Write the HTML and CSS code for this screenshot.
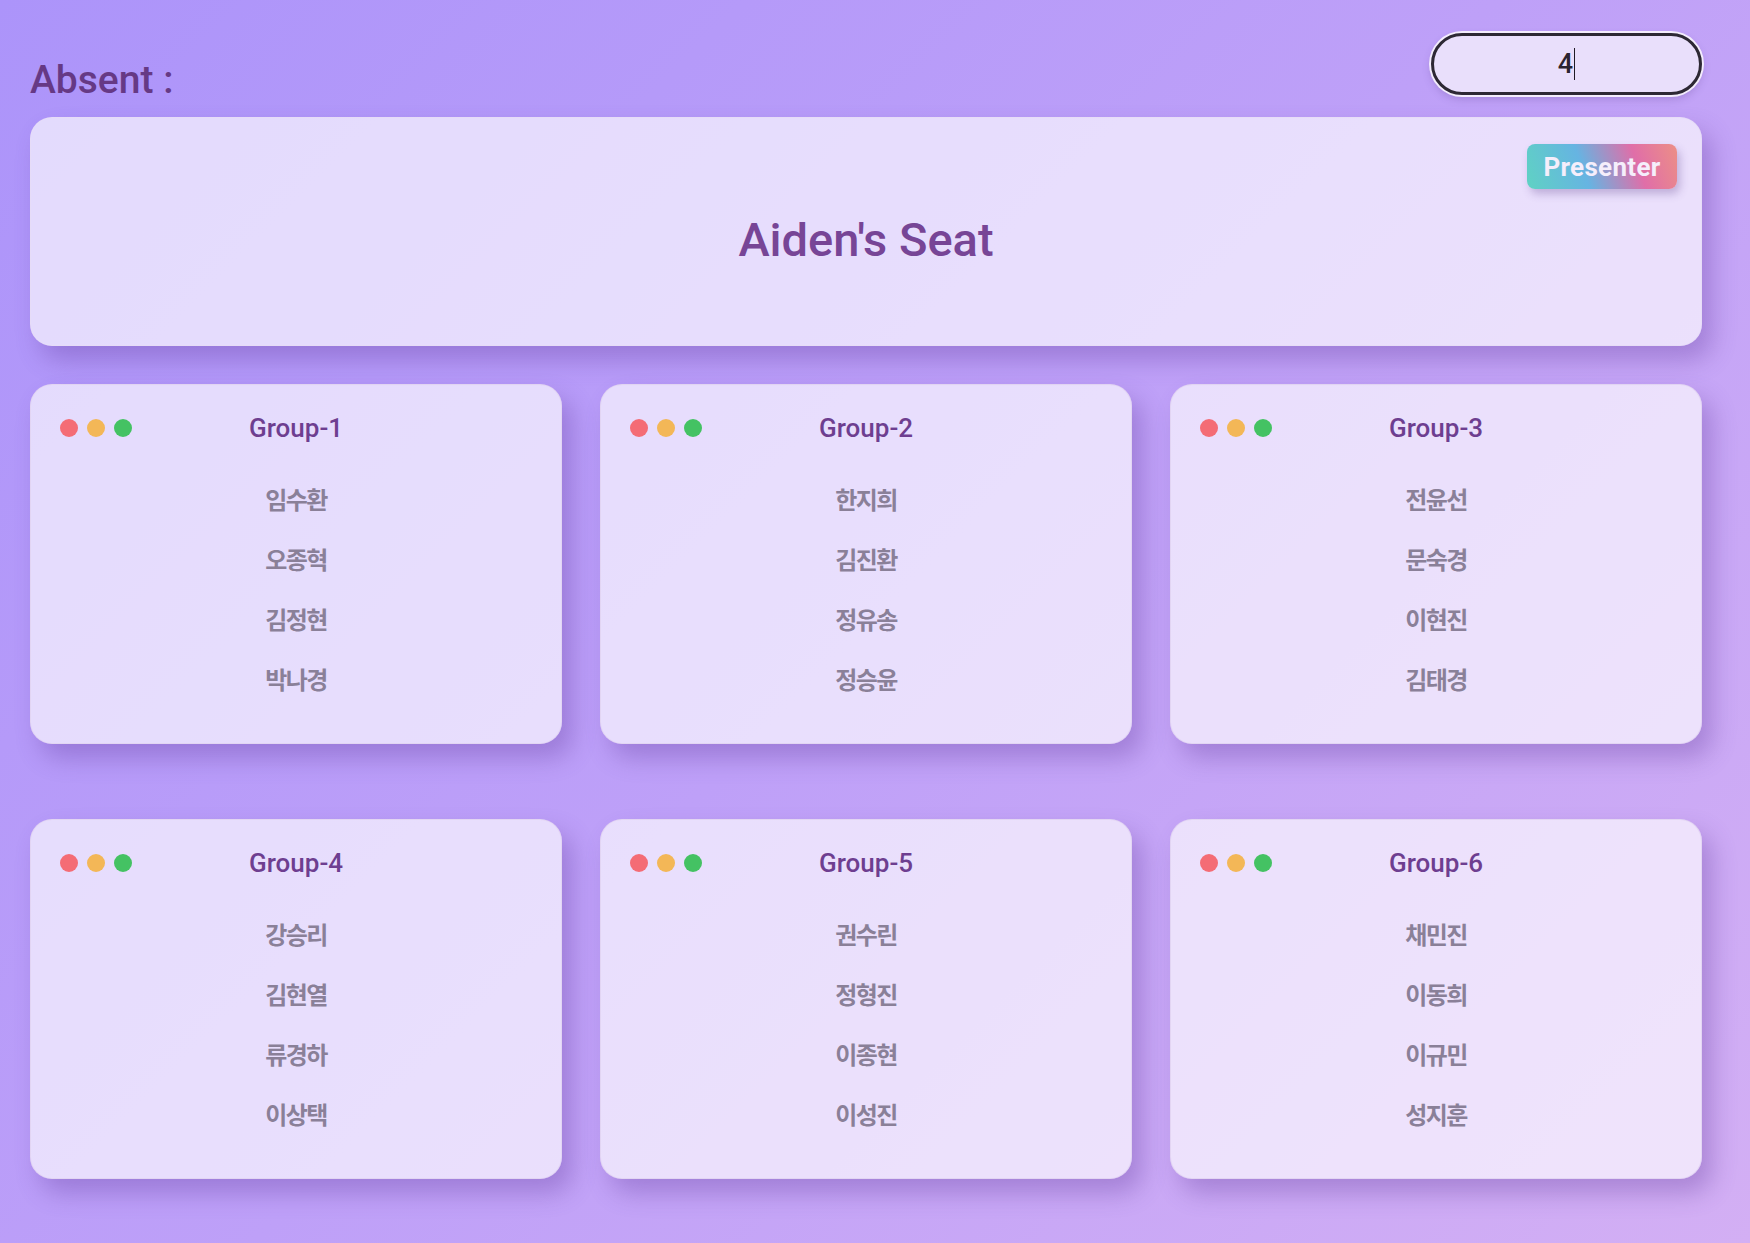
FILE: index.html
```html
<!DOCTYPE html>
<html lang="ko">
<head>
<meta charset="utf-8">
<title>Aiden's Seat</title>
<link rel="stylesheet" href="styles.css">
</head>
<body>
<div class="page">
  <header class="top">
    <div class="absent">Absent :</div>
    <div class="count-box"><span class="count-val">4</span><span class="caret"></span></div>
  </header>

  <section class="seat">
    <span class="badge">Presenter</span>
    <h1 class="seat-title">Aiden's Seat</h1>
  </section>

  <main class="groups">
    <div class="group">
      <div class="group-head"><div class="dots"><i class="dot red"></i><i class="dot yellow"></i><i class="dot green"></i></div><h2 class="group-title">Group-1</h2></div>
      <ul class="names"><li>임수환</li><li>오종혁</li><li>김정현</li><li>박나경</li></ul>
    </div>
    <div class="group">
      <div class="group-head"><div class="dots"><i class="dot red"></i><i class="dot yellow"></i><i class="dot green"></i></div><h2 class="group-title">Group-2</h2></div>
      <ul class="names"><li>한지희</li><li>김진환</li><li>정유송</li><li>정승윤</li></ul>
    </div>
    <div class="group">
      <div class="group-head"><div class="dots"><i class="dot red"></i><i class="dot yellow"></i><i class="dot green"></i></div><h2 class="group-title">Group-3</h2></div>
      <ul class="names"><li>전윤선</li><li>문숙경</li><li>이현진</li><li>김태경</li></ul>
    </div>
    <div class="group">
      <div class="group-head"><div class="dots"><i class="dot red"></i><i class="dot yellow"></i><i class="dot green"></i></div><h2 class="group-title">Group-4</h2></div>
      <ul class="names"><li>강승리</li><li>김현열</li><li>류경하</li><li>이상택</li></ul>
    </div>
    <div class="group">
      <div class="group-head"><div class="dots"><i class="dot red"></i><i class="dot yellow"></i><i class="dot green"></i></div><h2 class="group-title">Group-5</h2></div>
      <ul class="names"><li>권수린</li><li>정형진</li><li>이종현</li><li>이성진</li></ul>
    </div>
    <div class="group">
      <div class="group-head"><div class="dots"><i class="dot red"></i><i class="dot yellow"></i><i class="dot green"></i></div><h2 class="group-title">Group-6</h2></div>
      <ul class="names"><li>채민진</li><li>이동희</li><li>이규민</li><li>성지훈</li></ul>
    </div>
  </main>
</div>
</body>
</html>
```

FILE: styles.css
```css
* { box-sizing: border-box; }

html, body {
  margin: 0;
  padding: 0;
  width: 1750px;
  height: 1243px;
  overflow: hidden;
}

body {
  background: linear-gradient(135deg, #ac94fa 0%, #bea0f8 50%, #d3aff4 100%);
  font-family: Roboto, "Noto Sans CJK KR", sans-serif;
}

.page {
  padding: 33px 48px 0 30px;
}

.top {
  display: flex;
  justify-content: space-between;
  align-items: flex-start;
  margin-bottom: 17px;
}

.absent {
  margin-top: 28px;
  font-size: 39px;
  line-height: 1;
  font-weight: 500;
  color: #663985;
}

.count-box {
  width: 271px;
  height: 62px;
  border: 3px solid #2d2834;
  border-radius: 31px;
  background: #e9dffb;
  box-shadow: 0 0 0 2px #f3ecfc, 0 4px 8px rgba(80, 50, 130, 0.25);
  display: flex;
  align-items: center;
  justify-content: center;
  color: #2a2430;
  font-size: 27px;
  font-weight: 500;
}

.caret {
  width: 1px;
  height: 32px;
  background: #1f1a24;
  margin-left: 1px;
}

.seat {
  position: relative;
  height: 229px;
  border-radius: 22px;
  background: rgba(255, 255, 255, 0.66);
  border: 1px solid rgba(230, 220, 245, 0.8);
  box-shadow: 10px 14px 24px rgba(90, 50, 150, 0.32);
  display: flex;
  align-items: center;
  justify-content: center;
  padding-top: 16px;
}

.seat-title {
  margin: 0;
  font-size: 47px;
  font-weight: 500;
  color: #774596;
}

.badge {
  position: absolute;
  top: 26px;
  right: 24px;
  width: 150px;
  height: 45px;
  border-radius: 8px;
  background: linear-gradient(70deg, #5fd2c3 0%, #66b4e2 38%, #e06ea8 72%, #ec8f86 100%);
  box-shadow: 3px 5px 8px rgba(90, 60, 140, 0.3);
  color: #f5eefb;
  font-size: 26px;
  font-weight: 700;
  display: flex;
  align-items: center;
  justify-content: center;
  letter-spacing: 0.3px;
}

.groups {
  margin-top: 38px;
  display: grid;
  grid-template-columns: repeat(3, 1fr);
  column-gap: 38px;
  row-gap: 75px;
}

.group {
  height: 360px;
  border-radius: 22px;
  background: rgba(255, 255, 255, 0.66);
  border: 1px solid rgba(225, 212, 242, 0.9);
  box-shadow: 10px 14px 24px rgba(90, 50, 150, 0.32);
  padding: 30px 29px 0 29px;
}

.group-head {
  display: grid;
  grid-template-columns: 1fr auto 1fr;
  align-items: center;
  height: 26px;
}

.dots {
  display: flex;
  gap: 9px;
}

.dot {
  display: block;
  width: 18px;
  height: 18px;
  border-radius: 50%;
}

.red { background: #f46c75; }
.yellow { background: #f3b757; }
.green { background: #44c263; }

.group-title {
  margin: 0;
  font-size: 26px;
  line-height: 26px;
  font-weight: 500;
  color: #6e3e90;
}

.names {
  list-style: none;
  margin: 27px 0 0 0;
  padding: 0;
}

.names li {
  height: 60px;
  display: flex;
  align-items: center;
  justify-content: center;
  font-family: "Noto Sans CJK KR", sans-serif;
  font-size: 24px;
  font-weight: 700;
  letter-spacing: -1.5px;
  color: #8a8098;
}
```
